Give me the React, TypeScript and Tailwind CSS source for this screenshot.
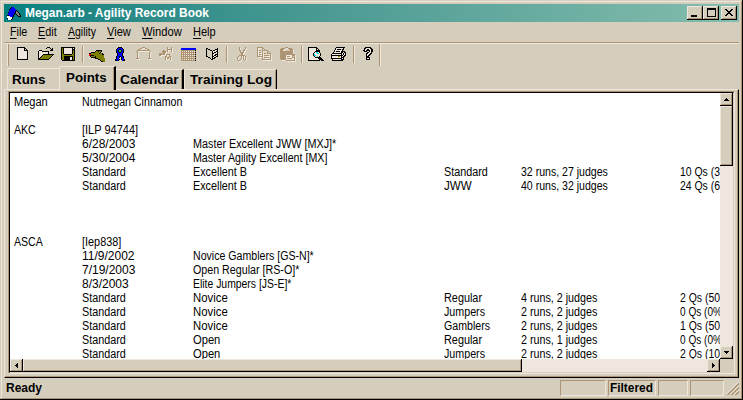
import React, { useLayoutEffect, useRef, useState } from 'react';

const COLORS: Record<string, string> = {
  k: '#000000',
  w: '#efe7de',
  W: '#ffffff',
  o: '#808000',
  b: '#0000ff',
  r: '#ff0000',
  g: '#00c040',
  c: '#00e0e8',
  s: '#ad9473',
  d: '#808080',
};

/** Small bitmap icon; one character is one pixel. */
function Pixels({ rows, emboss = false, className = '' }: { rows: string[]; emboss?: boolean; className?: string }) {
  const w = Math.max(...rows.map((r) => r.length)) + (emboss ? 1 : 0);
  const h = rows.length + (emboss ? 1 : 0);
  const draw = (off: number, only?: string) =>
    rows.flatMap((row, y) =>
      [...row].map((ch, x) =>
        COLORS[ch] && (!only || ch === 's') ? (
          <rect key={`${off}-${x}-${y}`} x={x + off} y={y + off} width={1} height={1} fill={only || COLORS[ch]} />
        ) : null,
      ),
    );
  return (
    <svg width={w} height={h} viewBox={`0 0 ${w} ${h}`} shapeRendering="crispEdges" className={`block shrink-0 ${className}`}>
      {emboss && draw(1, '#efe7de')}
      {draw(0)}
    </svg>
  );
}

/** Single line of text condensed or widened to fill the given width. */
function Fit({ w, children, u = false, className = '' }: { w: number; children: string; u?: boolean; className?: string }) {
  const ref = useRef<HTMLSpanElement>(null);
  const [scale, setScale] = useState(1);
  useLayoutEffect(() => {
    if (ref.current) setScale(w / ref.current.offsetWidth);
  }, [w, children]);
  return (
    <span className={`block shrink-0 whitespace-pre ${className}`} style={{ width: w }}>
      <span ref={ref} className="inline-block origin-left" style={{ transform: `scaleX(${scale})` }}>
        {u ? (
          <>
            <span className="underline underline-offset-2">{children[0]}</span>
            {children.slice(1)}
          </>
        ) : (
          children
        )}
      </span>
    </span>
  );
}

const appIcon = [
  '....kbb.......',
  '...kbbbb......',
  '..kbbbbbb.....',
  '..bbbbbbbk....',
  '..bbbbbbkdk...',
  '.kbbbbbbkddk..',
  '.bbbbbbkkdddk.',
  '.bbbbbbk.kddk.',
  'kkbbbbk...kddk',
  'WWWbbbk....kkk',
  'WWWWWk........',
  'kWWWWk........',
  '.WWWk.........',
];
const newDoc = ['kkkkkkkk...', 'kwwwwwwkk..', 'kwwwwwwkwk.', 'kwwwwwwkkkk', ...Array(8).fill('kwwwwwwwwwk'), 'kkkkkkkkkkk'];
const openDoc = [
  '.........kkk....',
  '........k...k.k.',
  '.............kk.',
  '.kkk........kkk.',
  'kwwwkkkkkkk.....',
  'kwwwwwwwwwk.....',
  'kwwwwwwwwwk.....',
  'kwwwwkkkkkkkkkkk',
  'kwwwkoooooooook.',
  'kwwkoooooooook..',
  'kwkoooooooook...',
  'kkoooooooook....',
  'kkkkkkkkkkk.....',
];
const save = [
  'kkkkkkkkkkkkkk',
  'kokwwwwwwwwkwk',
  'kokwwwwwwwwkkk',
  'kokwwwwwwwwkok',
  'kokwwwwwwwwkok',
  'kokwwwwwwwwkok',
  'kokwwwwwwwwkok',
  'kookkkkkkkkook',
  'kooooooooooook',
  'kookkkkkkkkkok',
  'kookkkkkkwwkok',
  'kookkkkkkwwkok',
  'kookkkkkkwwkok',
  '.kkkkkkkkkkkkk',
];
const dog = [
  '.......kkkkkk...',
  '......kookook...',
  '..kkkkoooook....',
  'kkooooooookook..',
  'rroooooooooookk.',
  'rkkkkoooooooooo.',
  '.kooookoooooooo.',
  '..kkkkkoooooooo.',
  '......kkkooooooo',
  '.........kkooooo',
  '...........koooo',
  '............kkoo',
];
const rosette = [
  '...kkkk...',
  '..kbbbbk..',
  '.kbbkkbbk.',
  '.kbkggkbk.',
  '.kbkggkbk.',
  '.kbbkkbbk.',
  '..kbbbbk..',
  '..kbbbbk..',
  '..kbbbbk..',
  '.kbbkkbbk.',
  '.kbbk.kbk.',
  '.kbb..kbb.',
  'kbbbk.kbbk',
  'kkbk...bkk',
];
const jump = [
  '......sss......',
  '....ss...ss....',
  '..ss.......ss..',
  '.sssssssssssss.',
  's.............s',
  '.s...........s.',
  '.s...........s.',
  '.s...........s.',
  '.s...........s.',
  '.s...........s.',
  '.s...........s.',
  'sss.........sss',
];
const run = [
  '........s...s',
  '........s...s',
  '........sssss',
  '....ss..s...s',
  '...ssss.s...s',
  '...ssss......',
  'sss.ss.......',
  'ssssss.ssss..',
  'ss.....s..s..',
  '......ss..ss.',
  '......s.ss.s.',
  '......s.ss.s.',
  '......s....s.',
];
const table = [
  'bbbbbbbbbbbbbbb',
  'bbbbbbbbbbbbbbb',
  ...Array.from({ length: 10 }, (_, i) => (i % 2 ? 'swswswswswswsws' : 'ssssssssssssssk')),
  'ssssssssssssssk',
];
const book = [
  'kk.........k',
  'k.kk.....kkk',
  'k...kk.kkw.k',
  'k.....kww.kk',
  'k.....kwkkwk',
  'k.....kkww.k',
  'k.....kwwkkk',
  'k.....kwkkwk',
  'kk....kkw.kk',
  '..kk..kwkk..',
  '....k.kkk...',
  '.....kk.....',
];
const cut = [
  '..s.....s',
  '..s.....s',
  '..s....s.',
  '..ss..ss.',
  '...s..s..',
  '...ssss..',
  '....ss...',
  '....ss...',
  '..ssssss.',
  '.s..s.s.s',
  's...s.s.s',
  's...s.s.s',
  's..s..s.s',
  '.ss....s.',
];
const copy = [
  'ssssss........',
  's....ss.......',
  's....s.s......',
  's.ss.ssssss...',
  's....s....ss..',
  's.ss.s....s.s.',
  's....s.ss.ssss',
  's.ss.s.......s',
  's....s.sssss.s',
  'ssssss.......s',
  '.....s.sssss.s',
  '.....s.......s',
  '.....sssssssss',
];
const paste = [
  '.....sss.......',
  '.ssss...ssss...',
  'ssss.....ssss..',
  'sss.......sss..',
  'sssssssssssss..',
  'sssssssssssss..',
  'sssssssssssss..',
  'sssssssssssssss',
  'sssssswwwwwwsss',
  'sssssswssswwsws',
  'sssssswwwwwwsss',
  'sssssswssssswws',
  '.ssssswwwwwwwws',
  '......sssssssss',
];
const preview = [
  'kkkkkkkkk.......',
  'kwwwwwwwkk......',
  'kwwwwwwwkwk.....',
  'kwwwwwwwkkkk....',
  'kwwwwwwkkkkk....',
  'kwwwwwkwccwk....',
  'kwwwwkwwwccwk...',
  'kwwwwkcwwwwwk...',
  'kwwwwkccwwwwk...',
  'kwwwwwkwwcwk....',
  'kwwwwwwkkkkkk...',
  'kwwwwwwwwwkkkk..',
  'kwwwwwwwwwwkkkk.',
  'kkkkkkkkkkkk.kkk',
];
const print = [
  '.....kkkkkkkkk.',
  '....kwwwwwwwk..',
  '....kwkkkkwkk..',
  '...kwwwwwwwk...',
  '...kwkkkkwkkkk.',
  '..kwwwwwwwkkwkk',
  '.kkkkkkkkkkwkwk',
  'kwwwwwwwwwkwkwk',
  'kkkkkkkkkkkkwkk',
  'kwwwwwwoowkwkk.',
  'kwwwwwwwwwkkk..',
  'kkkkkkkkkkkwk..',
  '.kwwwwwwwwkkk..',
  '.kkkkkkkkkkk...',
];
const help = [
  '..kkkkkk..',
  '.kkwwwwkk.',
  '.kwwkkwwkk',
  'kkwkkkkwkk',
  '.kkk..kwkk',
  '....kkwwk.',
  '...kkwwkk.',
  '...kwwkk..',
  '...kwkk...',
  '...kkk....',
  '...kkkk...',
  '...kwwk...',
  '...kkkk...',
];

const raised =
  'bg-[#d6cebd] shadow-[inset_-1px_-1px_#000,inset_1px_1px_#efe7de,inset_-2px_-2px_#ad9473]';

function Sep({ className = '' }: { className?: string }) {
  return <div className={`h-[17px] w-[2px] shrink-0 border-l border-r border-l-[#ad9473] border-r-[#efe7de] ${className}`} />;
}

function Titlebar() {
  return (
    <div className="flex h-[18px] shrink-0 items-center bg-linear-to-r from-[#008080] to-[#84bdad] pl-[3px] text-[12px] font-bold text-white">
      <Pixels rows={appIcon} className="mt-[1px]" />
      <Fit w={184} className="ml-[4px] leading-[18px]">Megan.arb - Agility Record Book</Fit>
      <div className="flex-1" />
      <div className={`flex h-[14px] w-[16px] items-end pb-[3px] pl-[4px] ${raised}`}>
        <div className="h-[2px] w-[6px] bg-black" />
      </div>
      <div className={`flex h-[14px] w-[16px] items-center justify-center pb-px ${raised}`}>
        <div className="h-[9px] w-[9px] border border-t-2 border-black" />
      </div>
      <div className={`mr-[2px] ml-[2px] flex h-[14px] w-[16px] items-center justify-center pb-px ${raised}`}>
        <Pixels rows={['kk....kk', '.kk..kk.', '..kkkk..', '...kk...', '..kkkk..', '.kk..kk.', 'kk....kk']} />
      </div>
    </div>
  );
}

const menu: [string, number, string][] = [
  ['File', 17, 'ml-[6px]'],
  ['Edit', 19, 'ml-[11px]'],
  ['Agility', 28, 'ml-[11px]'],
  ['View', 24, 'ml-[11px]'],
  ['Window', 40, 'ml-[11px]'],
  ['Help', 23, 'ml-[11px]'],
];

function Toolbar() {
  return (
    <div className="flex h-[22px] shrink-0 items-start pl-[3px] [&>svg]:mt-[3px]">
      <div className="h-[22px] w-[2px] border-l border-r border-l-[#efe7de] border-r-[#ad9473]" />
      <Pixels rows={newDoc} className="ml-[8px]" />
      <Pixels rows={openDoc} className="ml-[10px]" />
      <Pixels rows={save} className="ml-[7px]" />
      <Sep className="mt-[2px] ml-[7px]" />
      <Pixels rows={dog} className="ml-[5px] translate-y-[3px]" />
      <Pixels rows={rosette} className="ml-[10px]" />
      <Pixels rows={jump} emboss className="ml-[11px]" />
      <Pixels rows={run} emboss className="ml-[7px]" />
      <Pixels rows={table} className="ml-[8px] translate-y-px" />
      <Pixels rows={book} className="ml-[10px] translate-y-px" />
      <Sep className="mt-[2px] ml-[8px]" />
      <Pixels rows={cut} emboss className="ml-[9px]" />
      <Pixels rows={copy} emboss className="ml-[10px]" />
      <Pixels rows={paste} emboss className="ml-[8px]" />
      <Sep className="mt-[2px] ml-[5px]" />
      <Pixels rows={preview} className="ml-[5px]" />
      <Pixels rows={print} className="ml-[7px]" />
      <Sep className="mt-[2px] ml-[7px]" />
      <Pixels rows={help} className="ml-[8px]" />
      <div className="ml-[6px] h-[22px] w-[2px] border-l border-r border-l-[#ad9473] border-r-[#efe7de]" />
    </div>
  );
}

function Tabs() {
  const tab = 'border-t border-l border-[#efe7de] rounded-tl-[2px]';
  return (
    <div className="flex h-[23px] shrink-0 items-end pl-[3px] text-[13px] font-bold">
      <div className={`h-[21px] w-[52px] pl-[4px] leading-[22px] ${tab}`}>
        <Fit w={34}>Runs</Fit>
      </div>
      <div className={`z-10 -mb-px h-[24px] w-[57px] border-r-2 border-r-black pl-[6px] leading-[22px] shadow-[inset_-1px_0_#ad9473] bg-[#d6cebd] ${tab} border-r-black!`}>
        <Fit w={41}>Points</Fit>
      </div>
      <div className="h-[20px] w-[68px] border-t border-r-2 border-t-[#efe7de] border-r-black pl-[4px] leading-[20px] shadow-[inset_-1px_0_#ad9473]">
        <Fit w={59}>Calendar</Fit>
      </div>
      <div className="h-[20px] w-[93px] rounded-tl-[2px] border-t border-l border-r border-t-[#efe7de] border-r-black border-l-[#efe7de] pl-[5px] leading-[20px] shadow-[inset_-1px_0_#ad9473]">
        <Fit w={82}>Training Log</Fit>
      </div>
    </div>
  );
}

type Cell = [string, number] | null;
const STD: Cell = ['Standard', 44];
const NOV: Cell = ['Novice', 35];
const OPEN: Cell = ['Open', 27];
const records: Cell[][] = [
  [['Megan', 34], ['Nutmegan Cinnamon', 100]],
  [],
  [['AKC', 22], ['[ILP 94744]', 56]],
  [null, ['6/28/2003', 53], ['Master Excellent JWW [MXJ]*', 143]],
  [null, ['5/30/2004', 53], ['Master Agility Excellent [MX]', 134]],
  [null, STD, ['Excellent B', 54], STD, ['32 runs, 27 judges', 87], ['10 Qs (3', 40]],
  [null, STD, ['Excellent B', 54], ['JWW', 28], ['40 runs, 32 judges', 87], ['24 Qs (6', 40]],
  [],
  [],
  [],
  [['ASCA', 29], ['[Iep838]', 39]],
  [null, ['11/9/2002', 53], ['Novice Gamblers [GS-N]*', 121]],
  [null, ['7/19/2003', 53], ['Open Regular [RS-O]*', 106]],
  [null, ['8/3/2003', 47], ['Elite Jumpers [JS-E]*', 98]],
  [null, STD, NOV, ['Regular', 38], ['4 runs, 2 judges', 76], ['2 Qs (50', 40]],
  [null, STD, NOV, ['Jumpers', 41], ['2 runs, 2 judges', 76], ['0 Qs (0%', 42]],
  [null, STD, NOV, ['Gamblers', 46], ['2 runs, 2 judges', 76], ['1 Qs (50', 40]],
  [null, STD, OPEN, ['Regular', 38], ['2 runs, 1 judges', 76], ['0 Qs (0%', 42]],
  [null, STD, OPEN, ['Jumpers', 41], ['2 runs, 2 judges', 76], ['2 Qs (10', 40]],
];

function Records() {
  return (
    <div className="h-[266px] w-[710px] overflow-hidden bg-white pt-[2px] pl-[4px] text-[12px] leading-[14px]">
      {records.map((row, i) => (
        <div key={i} className="grid h-[14px] grid-cols-[68px_111px_251px_77px_159px_40px]">
          {row.map((c, j) => (c ? <Fit key={j} w={c[1]}>{c[0]}</Fit> : <span key={j} />))}
        </div>
      ))}
    </div>
  );
}

const button = `flex items-center justify-center ${raised}`;

export default function App() {
  return (
    <div className="h-[400px] w-[743px] overflow-hidden bg-[#d6cebd] font-['Liberation_Sans',sans-serif] text-black shadow-[inset_-1px_-1px_#000,inset_1px_1px_#d6cebd,inset_-2px_-2px_#ad9473,inset_2px_2px_#efe7de]">
      <div className="flex h-full flex-col pt-[4px] pr-[4px] pl-[4px]">
        <Titlebar />
        <div className="flex h-[20px] shrink-0 text-[12px] leading-[20px]">
          {menu.map(([t, w, m]) => (
            <Fit key={t} w={w} u className={m}>{t}</Fit>
          ))}
        </div>
        <div className="h-[2px] shrink-0 border-t border-b border-t-[#ad9473] border-b-[#efe7de]" />
        <Toolbar />
        <Tabs />
        <div className="flex h-[289px] shrink-0 flex-col border-t border-r border-b border-l border-t-[#efe7de] border-r-black border-b-black border-l-[#efe7de] pt-px pl-[3px] shadow-[inset_-1px_-1px_#ad9473]">
          <div className="w-[727px] border border-t-[#ad9473] border-r-[#efe7de] border-b-[#efe7de] border-l-[#ad9473]">
            <div className="border border-t-black border-r-[#d6cebd] border-b-[#d6cebd] border-l-black">
              <div className="flex h-[266px]">
                <Records />
                <div className="flex w-[13px] flex-col bg-[#efe7de]">
                  <div className={`h-[13px] ${button}`}>
                    <Pixels rows={['..k..', '.kkk.', 'kkkkk']} />
                  </div>
                  <div className={`h-[60px] ${raised}`} />
                  <div className="flex-1" />
                  <div className={`h-[13px] ${button}`}>
                    <Pixels rows={['kkkkk', '.kkk.', '..k..']} />
                  </div>
                </div>
              </div>
              <div className="flex h-[13px]">
                <div className="flex w-[710px] bg-[#efe7de]">
                  <div className={`w-[13px] ${button}`}>
                    <Pixels rows={['..k', '.kk', 'kkk', '.kk', '..k']} />
                  </div>
                  <div className={`w-[499px] ${raised}`} />
                  <div className="flex-1" />
                  <div className={`w-[13px] ${button}`}>
                    <Pixels rows={['k..', 'kk.', 'kkk', 'kk.', 'k..']} />
                  </div>
                </div>
              </div>
            </div>
          </div>
        </div>
        <div className="flex h-[20px] shrink-0 items-start pt-[2px] pl-[2px] text-[13px] font-bold leading-[16px] [&>div]:border [&>div]:border-t-[#ad9473] [&>div]:border-r-[#efe7de] [&>div]:border-b-[#efe7de] [&>div]:border-l-[#ad9473]">
          <Fit w={36}>Ready</Fit>
          <span className="flex-1" />
          <div className="h-[16px] w-[46px]" />
          <div className="ml-[2px] h-[16px] w-[48px] pl-px leading-[14px]">
            <Fit w={43}>Filtered</Fit>
          </div>
          <div className="ml-[2px] h-[16px] w-[30px]" />
          <div className="ml-[2px] h-[16px] w-[34px]" />
          <svg width="13" height="13" viewBox="0 0 13 13" className="mt-[2px] ml-[2px] shrink-0" fill="none">
            <path d="M0 12.5L12.5 0M4 12.5L12.5 4M8 12.5L12.5 8" stroke="#efe7de" />
            <path d="M1 13L13 1M2 13L13 2M5 13L13 5M6 13L13 6M9 13L13 9M10 13L13 10" stroke="#ad9473" />
          </svg>
        </div>
      </div>
    </div>
  );
}
